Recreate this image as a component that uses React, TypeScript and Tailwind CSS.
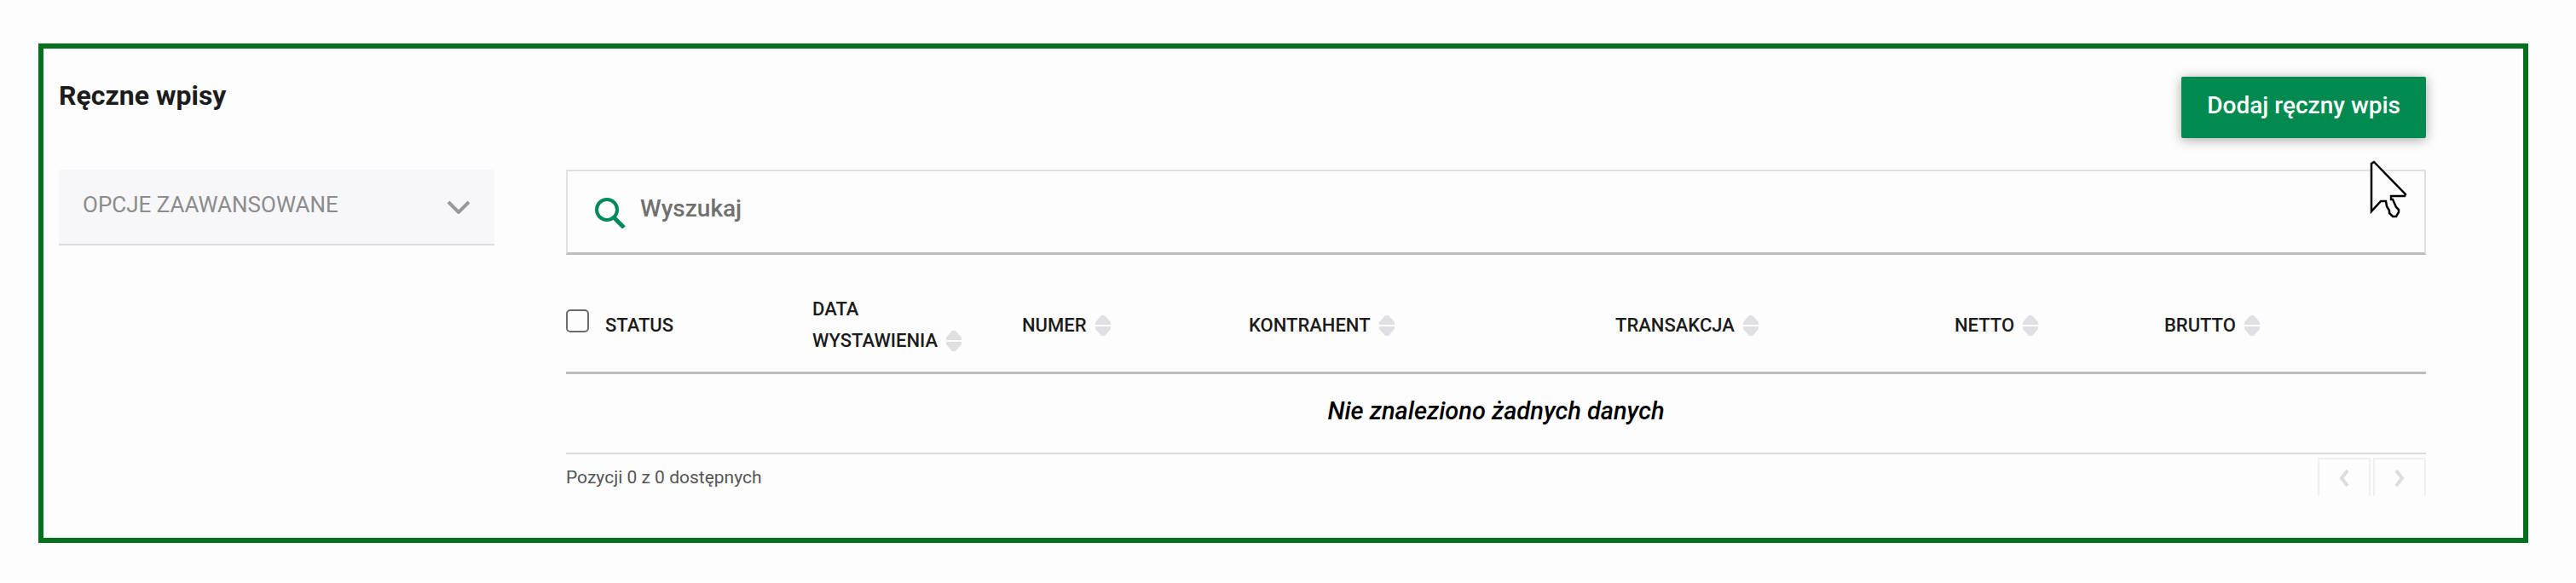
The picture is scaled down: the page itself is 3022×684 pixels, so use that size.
import React from "react";

const columns = [
  { label: "Data wystawienia", width: "w-[11.27%]" },
  { label: "Numer", width: "w-[12.19%]" },
  { label: "Kontrahent", width: "w-[19.71%]" },
  { label: "Transakcja", width: "w-[18.24%]" },
  { label: "Netto", width: "w-[11.27%]" },
  { label: "Brutto", width: "" },
];

function SortIcon() {
  return (
    <svg viewBox="0 0 18 24" className="ml-2.5 inline-block h-6 w-[18px] align-[-5px]" fill="#e0e0e4" aria-hidden="true">
      <path d="M7 0 H11 L18 8 V11 H0 V8 Z" />
      <path d="M0 13 H18 V16 L11 24 H7 L0 16 Z" />
    </svg>
  );
}

function Cursor() {
  return (
    <svg viewBox="0 0 46 70" className="pointer-events-none absolute top-[-12px] right-[20px] h-[70px] w-[46px]" aria-hidden="true">
      <path
        d="M5 3 L2 5 V61 L13 49 H19 L20 55 L23 60 L23 63 L27 67 H31 L34 62 V59 L31 56 L27 47 L25 47 V43 H41 L42 41 Z"
        fill="#fdfdfd"
        stroke="#000"
        strokeWidth="2.5"
      />
    </svg>
  );
}

export default function App() {
  return (
    <div className="bg-[#fdfdfd] pt-[51px] pr-14 pb-11 pl-[45px] font-['Roboto',sans-serif] text-[#1c1c1c]">
      <div className="border-[6px] border-[#03701c] pt-[33px] pr-[114px] pb-12 pl-[18px]">
        <header className="flex h-[109px] items-start justify-between">
          <h1 className="text-[32px] leading-[44px] font-bold">Ręczne wpisy</h1>
          <button type="button" className="h-[72px] rounded-xs bg-[#008a4f] px-[30px] pb-1 text-[28px] font-medium text-white shadow-[0_2px_14px_rgba(0,0,0,0.35)]">
            Dodaj ręczny wpis
          </button>
        </header>
        <div className="flex items-start gap-[84px]">
          <button type="button" className="flex h-[89px] w-[511px] shrink-0 items-center justify-between border-b-2 border-[#dcdce0] bg-[#f7f7f9] px-7 text-[26px] text-[#8c8c8c] uppercase">
            <span className="pb-1">Opcje zaawansowane</span>
            <svg viewBox="0 0 28 16" className="h-4 w-7" fill="none" stroke="#999999" strokeWidth="4" aria-hidden="true">
              <path d="M2 2 L14 14 L26 2" />
            </svg>
          </button>
          <main className="min-w-0 flex-1">
            <div className="relative">
              <label className="flex h-[100px] items-center gap-4 border-2 border-b-[3px] border-[#dfdfe4] border-b-[#bdbdbd] pl-[31px]">
                <svg viewBox="0 0 38 38" className="h-[38px] w-[38px]" fill="none" stroke="#008a5a" strokeWidth="4" aria-hidden="true">
                  <circle cx="15" cy="16" r="12" />
                  <path d="M23 25 L35 37" strokeWidth="5" />
                </svg>
                <input type="text" aria-label="Wyszukaj" placeholder="Wyszukaj" className="h-14 min-w-0 flex-1 bg-transparent pb-2 text-[28px] font-medium outline-none placeholder:text-[#707070]" />
              </label>
              <Cursor />
            </div>
            <table className="mt-[26px] w-full table-fixed border-collapse text-left">
              <thead>
                <tr className="h-[112px] border-b-[3px] border-[#bdbdbd] text-[22px] leading-[37px] uppercase">
                  <th className="w-[46px] pb-2">
                    <input type="checkbox" aria-label="Zaznacz wszystkie" className="block h-[27px] w-[27px] appearance-none rounded-[5px] border-2 border-[#6b6b6b]" />
                  </th>
                  <th className="w-[11.14%] pt-0.5 font-medium">Status</th>
                  {columns.map((c) => (
                    <th key={c.label} className={`${c.width} pt-0.5 pr-12 font-medium`}>
                      {c.label}
                      <SortIcon />
                    </th>
                  ))}
                </tr>
              </thead>
              <tbody>
                <tr className="h-[95px] border-b-2 border-[#dcdce0]">
                  <td colSpan={8} className="pb-1 text-center text-[29px] font-medium text-black italic">
                    Nie znaleziono żadnych danych
                  </td>
                </tr>
              </tbody>
            </table>
            <footer className="flex items-start justify-between pt-1">
              <p className="text-[21px] leading-[46px] text-[#555555]">Pozycji 0 z 0 dostępnych</p>
              <nav aria-label="Stronicowanie" className="flex gap-[3px]">
                <button type="button" aria-label="Poprzednia strona" disabled className="flex h-[45px] w-[62px] items-center justify-center border-2 border-b-0 border-[#f0f0f2]">
                  <svg viewBox="0 0 12 20" className="h-5 w-3" fill="none" stroke="#dcdce2" strokeWidth="4" aria-hidden="true">
                    <path d="M10 1 L3 10 L10 19" />
                  </svg>
                </button>
                <button type="button" aria-label="Następna strona" disabled className="flex h-[45px] w-[62px] items-center justify-center border-2 border-b-0 border-[#f0f0f2]">
                  <svg viewBox="0 0 12 20" className="h-5 w-3" fill="none" stroke="#dcdce2" strokeWidth="4" aria-hidden="true">
                    <path d="M2 1 L9 10 L2 19" />
                  </svg>
                </button>
              </nav>
            </footer>
          </main>
        </div>
      </div>
    </div>
  );
}
